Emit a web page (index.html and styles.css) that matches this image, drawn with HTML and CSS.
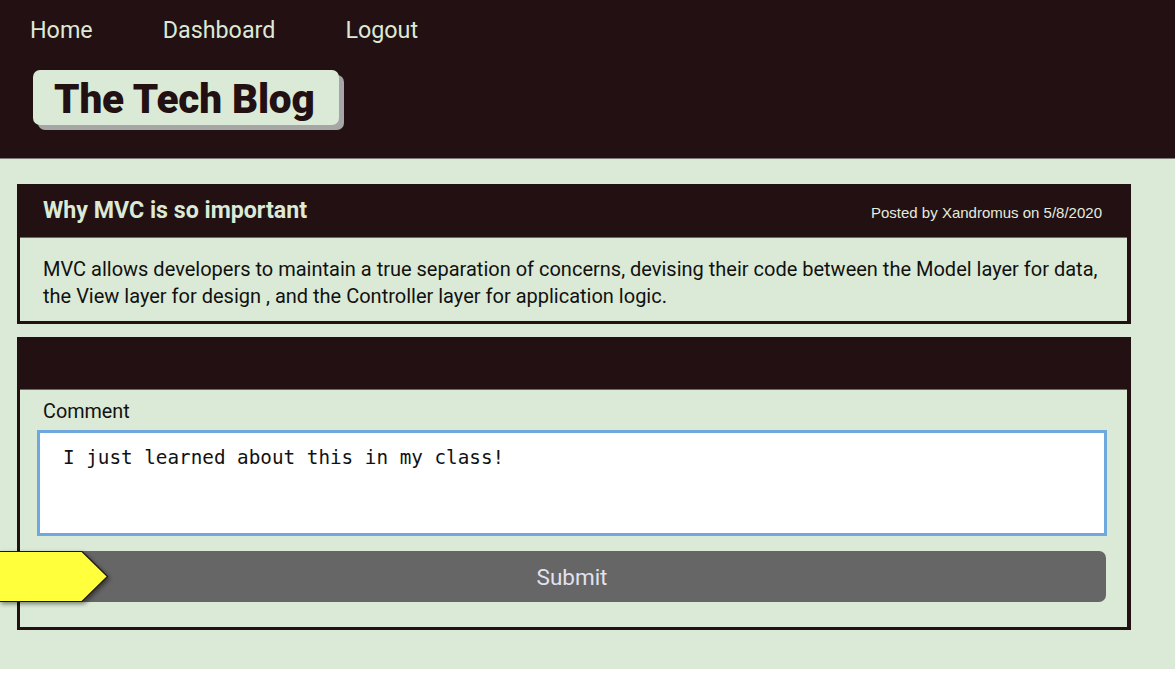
FILE: index.html
```html
<!DOCTYPE html>
<html lang="en">
<head>
<meta charset="utf-8">
<title>The Tech Blog</title>
<link rel="stylesheet" href="styles.css">
</head>
<body>
<header class="site-header">
  <nav class="nav">
    <a class="nav-link" href="#">Home</a>
    <a class="nav-link" href="#">Dashboard</a>
    <a class="nav-link" href="#">Logout</a>
  </nav>
  <div class="logo"><h1 class="logo-text">The Tech Blog</h1></div>
</header>
<main class="main">
  <article class="card">
    <div class="card-head">
      <h2 class="post-title">Why MVC is so important</h2>
      <span class="post-meta">Posted by Xandromus on 5/8/2020</span>
    </div>
    <div class="card-body">
      <p class="post-text">MVC allows developers to maintain a true separation of concerns, devising their code between the Model layer for data, the View layer for design , and the Controller layer for application logic.</p>
    </div>
  </article>
  <section class="card">
    <div class="card-head card-head-empty"></div>
    <form class="comment-form">
      <label class="comment-label" for="comment">Comment</label>
      <textarea class="comment-input" id="comment">I just learned about this in my class!</textarea>
      <div class="submit-row">
        <svg class="pointer" width="112" height="56" viewBox="0 0 112 56" aria-hidden="true">
          <polygon points="-2,0.5 83,0.5 108.5,25.5 83,50.5 -2,50.5" fill="#ffff3c" stroke="#1d1410" stroke-width="1.2"/>
        </svg>
        <button class="submit-btn" type="button">Submit</button>
      </div>
    </form>
  </section>
</main>
</body>
</html>
```

FILE: styles.css
```css
html, body {
  margin: 0;
  padding: 0;
  background: #ffffff;
}

body {
  font-family: Roboto, "Noto Sans", sans-serif;
}

.site-header {
  background: #221012;
  padding: 16px 0 33px 30px;
  border-bottom: 1px solid #7d7a78;
}

.nav {
  display: flex;
  gap: 70px;
  line-height: 28px;
}

.nav-link {
  color: #dbead6;
  text-decoration: none;
  font-size: 23.3px;
}

.logo {
  display: inline-block;
  margin: 26px 0 0 3px;
  background: #dbead6;
  border-radius: 7px;
  box-shadow: 5px 5px 0 #a6a6a6;
  padding: 0 24px 0 21px;
  height: 55px;
}

.logo-text {
  margin: 0;
  font-size: 40.5px;
  font-weight: 900;
  line-height: 58px;
  color: #221012;
  letter-spacing: -0.15px;
}

.main {
  background: #dbead6;
  padding: 25px 44px 39px 17px;
  display: flex;
  flex-direction: column;
  gap: 13px;
}

.card {
  border: 3px solid #221012;
  border-right-width: 4px;
  border-bottom-width: 3px;
  background: #dbead6;
}

.card-head {
  background: #221012;
  height: 50px;
  display: flex;
  align-items: center;
  justify-content: space-between;
  padding: 0 25px 0 23px;
  border-bottom: 1px solid #6f6a66;
}

.card-head-empty {
  height: 49px;
}

.post-title {
  margin: 0;
  font-size: 23.2px;
  font-weight: 700;
  color: #dbead6;
  padding-bottom: 5px;
}

.post-meta {
  font-family: "Liberation Sans", Arial, sans-serif;
  font-size: 15px;
  color: #e4ecdf;
  padding-top: 0;
}

.card-body {
  padding: 18px 23px 11px 23px;
}

.post-text {
  margin: 0;
  font-size: 20px;
  line-height: 27px;
  color: #111;
}

.comment-form {
  display: flex;
  flex-direction: column;
  padding: 10px 20px 25px 17px;
}

.comment-label {
  font-size: 19.8px;
  line-height: 24px;
  color: #111;
  margin-left: 6px;
  margin-bottom: 6px;
}

.comment-input {
  box-sizing: border-box;
  width: 100%;
  height: 106px;
  border: 3px solid #6fa8dc;
  background: #fff;
  padding: 13px 20px 12px 23px;
  font-family: "DejaVu Sans Mono", monospace;
  font-size: 19.3px;
  line-height: 23px;
  color: #111;
  resize: none;
  outline: none;
  margin: 0;
}

.submit-row {
  position: relative;
  margin-top: 15px;
  padding: 0 1px;
}

.submit-btn {
  display: block;
  width: 100%;
  height: 51px;
  border: none;
  border-radius: 7px;
  background: #666666;
  color: #e2e1f0;
  font-family: Roboto, "Noto Sans", sans-serif;
  font-size: 22.5px;
}

.pointer {
  position: absolute;
  left: -38px;
  top: 0;
  z-index: 2;
  filter: drop-shadow(2px 2px 2px rgba(0, 0, 0, 0.45));
}
```
